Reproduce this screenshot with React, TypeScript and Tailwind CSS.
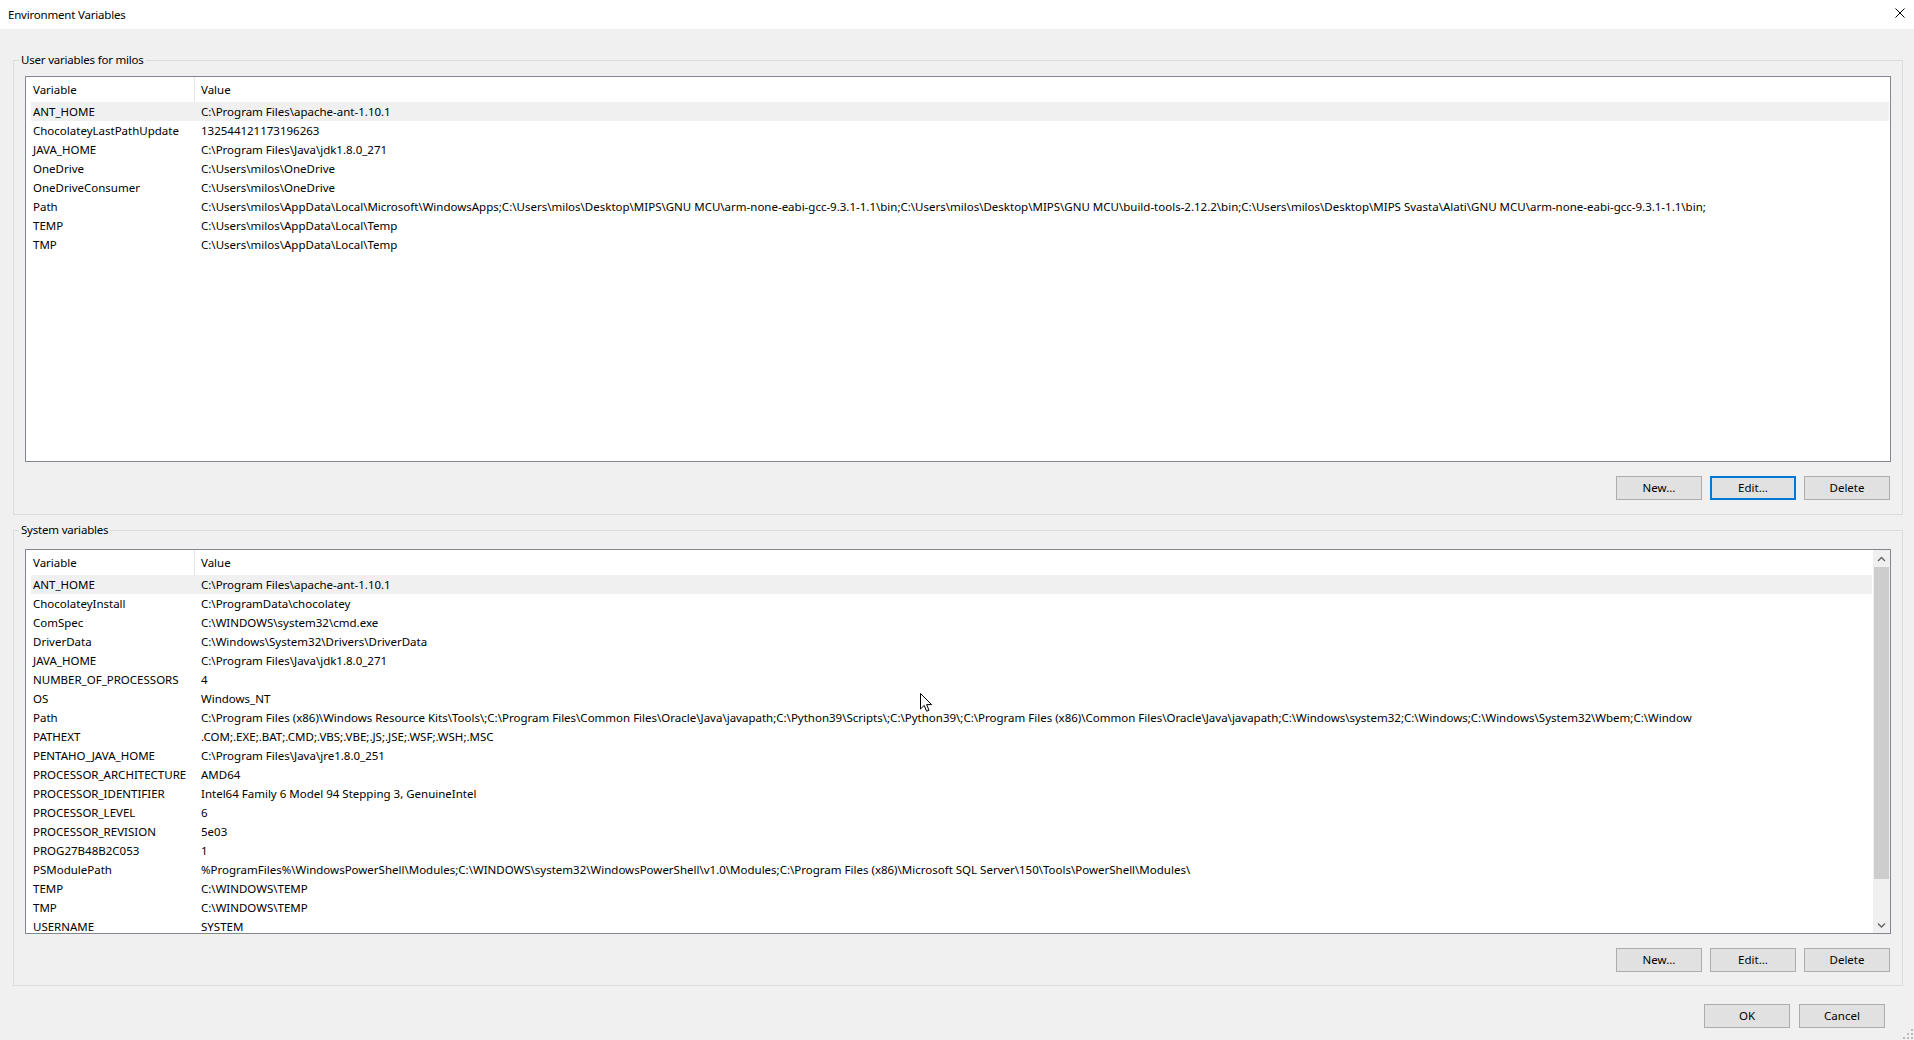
import React from 'react';

type EnvVar = { name: string; value: string };

const userVars: EnvVar[] = [
  { name: 'ANT_HOME', value: String.raw`C:\Program Files\apache-ant-1.10.1` },
  { name: 'ChocolateyLastPathUpdate', value: '132544121173196263' },
  { name: 'JAVA_HOME', value: String.raw`C:\Program Files\Java\jdk1.8.0_271` },
  { name: 'OneDrive', value: String.raw`C:\Users\milos\OneDrive` },
  { name: 'OneDriveConsumer', value: String.raw`C:\Users\milos\OneDrive` },
  {
    name: 'Path',
    value: String.raw`C:\Users\milos\AppData\Local\Microsoft\WindowsApps;C:\Users\milos\Desktop\MIPS\GNU MCU\arm-none-eabi-gcc-9.3.1-1.1\bin;C:\Users\milos\Desktop\MIPS\GNU MCU\build-tools-2.12.2\bin;C:\Users\milos\Desktop\MIPS Svasta\Alati\GNU MCU\arm-none-eabi-gcc-9.3.1-1.1\bin;`,
  },
  { name: 'TEMP', value: String.raw`C:\Users\milos\AppData\Local\Temp` },
  { name: 'TMP', value: String.raw`C:\Users\milos\AppData\Local\Temp` },
];

const systemVars: EnvVar[] = [
  { name: 'ANT_HOME', value: String.raw`C:\Program Files\apache-ant-1.10.1` },
  { name: 'ChocolateyInstall', value: String.raw`C:\ProgramData\chocolatey` },
  { name: 'ComSpec', value: String.raw`C:\WINDOWS\system32\cmd.exe` },
  { name: 'DriverData', value: String.raw`C:\Windows\System32\Drivers\DriverData` },
  { name: 'JAVA_HOME', value: String.raw`C:\Program Files\Java\jdk1.8.0_271` },
  { name: 'NUMBER_OF_PROCESSORS', value: '4' },
  { name: 'OS', value: 'Windows_NT' },
  {
    name: 'Path',
    value: String.raw`C:\Program Files (x86)\Windows Resource Kits\Tools\;C:\Program Files\Common Files\Oracle\Java\javapath;C:\Python39\Scripts\;C:\Python39\;C:\Program Files (x86)\Common Files\Oracle\Java\javapath;C:\Windows\system32;C:\Windows;C:\Windows\System32\Wbem;C:\Window`,
  },
  { name: 'PATHEXT', value: '.COM;.EXE;.BAT;.CMD;.VBS;.VBE;.JS;.JSE;.WSF;.WSH;.MSC' },
  { name: 'PENTAHO_JAVA_HOME', value: String.raw`C:\Program Files\Java\jre1.8.0_251` },
  { name: 'PROCESSOR_ARCHITECTURE', value: 'AMD64' },
  { name: 'PROCESSOR_IDENTIFIER', value: 'Intel64 Family 6 Model 94 Stepping 3, GenuineIntel' },
  { name: 'PROCESSOR_LEVEL', value: '6' },
  { name: 'PROCESSOR_REVISION', value: '5e03' },
  { name: 'PROG27B48B2C053', value: '1' },
  {
    name: 'PSModulePath',
    value:
      String.raw`%ProgramFiles%\WindowsPowerShell\Modules;C:\WINDOWS\system32\WindowsPowerShell\v1.0\Modules;C:\Program Files (x86)\Microsoft SQL Server\150\Tools\PowerShell\Modules` +
      '\\',
  },
  { name: 'TEMP', value: 'C:\\WINDOWS\\TEMP' },
  { name: 'TMP', value: 'C:\\WINDOWS\\TEMP' },
  { name: 'USERNAME', value: 'SYSTEM' },
];

function WinButton({ label, focused }: { label: string; focused?: boolean }) {
  return (
    <button
      className={
        focused
          ? 'w-[86px] h-[24px] bg-[#e1e1e1] border-2 border-[#0078d7] text-black leading-none'
          : 'w-[86px] h-[24px] bg-[#e1e1e1] border border-[#adadad] text-black leading-none'
      }
    >
      {label}
    </button>
  );
}

function ListHeader() {
  return (
    <div className="flex h-[25px] items-center shrink-0">
      <div className="w-[169px] h-full flex items-center pl-[7px] border-r border-[#e5e5e5]">Variable</div>
      <div className="pl-[6px]">Value</div>
    </div>
  );
}

function ListRows({ rows }: { rows: EnvVar[] }) {
  return (
    <div className="flex flex-col">
      {rows.map((row, i) => (
        <div
          key={row.name}
          className={
            i === 0
              ? 'flex h-[19px] items-center ml-[5px] mr-[1px] bg-[#f0f0f0] shrink-0'
              : 'flex h-[19px] items-center ml-[5px] mr-[1px] shrink-0'
          }
        >
          <div className="w-[163px] pl-[2px] shrink-0 whitespace-nowrap overflow-hidden">{row.name}</div>
          <div className="pl-[7px] whitespace-nowrap">{row.value}</div>
        </div>
      ))}
    </div>
  );
}

function Chevron({ down }: { down?: boolean }) {
  return (
    <svg width="9" height="6" viewBox="0 0 9 6">
      <path
        d={down ? 'M1 1.5 L4.5 5 L8 1.5' : 'M1 5 L4.5 1.5 L8 5'}
        fill="none"
        stroke="#606060"
        strokeWidth="1.3"
      />
    </svg>
  );
}

export default function App() {
  return (
    <div className="relative w-[1914px] h-[1040px] overflow-hidden bg-[#f0f0f0] text-[11.5px] text-black font-['Noto_Sans',sans-serif]">
      {/* title bar */}
      <div className="h-[29px] bg-white flex justify-between pl-[8px] pr-[9px]">
        <span className="self-center tracking-[-0.2px]">Environment Variables</span>
        <svg className="mt-[8px]" width="10" height="10" viewBox="0 0 10 10">
          <path d="M0.5 0.5 L9.5 9.5 M9.5 0.5 L0.5 9.5" stroke="#000" strokeWidth="1" />
        </svg>
      </div>

      <div className="pl-[13px] pr-[11px] pt-[23px]">
        {/* user variables */}
        <fieldset className="h-[463px] border border-[#dcdcdc]">
          <legend className="ml-[5px] px-[2px] leading-[16px] tracking-[-0.2px]">User variables for milos</legend>
          <div className="px-[11px]">
            <div className="mt-[8px] h-[386px] border border-[#828790] bg-white overflow-hidden">
              <ListHeader />
              <ListRows rows={userVars} />
            </div>
            <div className="mt-[14px] mr-[1px] flex justify-end gap-[8px]">
              <WinButton label="New..." />
              <WinButton label="Edit..." focused />
              <WinButton label="Delete" />
            </div>
          </div>
        </fieldset>

        {/* system variables */}
        <fieldset className="mt-[7px] h-[464px] border border-[#dcdcdc]">
          <legend className="ml-[5px] px-[2px] leading-[16px] tracking-[-0.2px]">System variables</legend>
          <div className="px-[11px]">
            <div className="mt-[11px] h-[385px] border border-[#828790] bg-white overflow-hidden flex">
              <div className="flex-1 min-w-0 overflow-hidden">
                <ListHeader />
                <ListRows rows={systemVars} />
              </div>
              <div className="w-[17px] shrink-0 bg-[#f0f0f0] flex flex-col">
                <div className="h-[17px] flex items-center justify-center">
                  <Chevron />
                </div>
                <div className="flex-1">
                  <div className="mx-[1px] h-[312px] bg-[#cdcdcd]" />
                </div>
                <div className="h-[17px] flex items-center justify-center">
                  <Chevron down />
                </div>
              </div>
            </div>
            <div className="mt-[14px] mr-[1px] flex justify-end gap-[8px]">
              <WinButton label="New..." />
              <WinButton label="Edit..." />
              <WinButton label="Delete" />
            </div>
          </div>
        </fieldset>

        <div className="mt-[18px] pr-[18px] flex justify-end gap-[9px]">
          <WinButton label="OK" />
          <WinButton label="Cancel" />
        </div>
      </div>

      {/* mouse pointer */}
      <svg className="absolute left-[920px] top-[693px]" width="13" height="20" viewBox="0 0 13 20">
        <path
          d="M0.5 0.5 L0.5 16 L4.2 12.4 L6.6 18.2 L9 17.2 L6.6 11.6 L11.6 11.6 Z"
          fill="#fff"
          stroke="#000"
          strokeWidth="1"
        />
      </svg>

      {/* size grip */}
      <svg className="absolute right-0 bottom-0" width="12" height="12" viewBox="0 0 12 12">
        <rect x="9" y="1" width="2" height="2" fill="#bcbcbc" />
        <rect x="9" y="5" width="2" height="2" fill="#bcbcbc" />
        <rect x="5" y="5" width="2" height="2" fill="#bcbcbc" />
        <rect x="9" y="9" width="2" height="2" fill="#bcbcbc" />
        <rect x="5" y="9" width="2" height="2" fill="#bcbcbc" />
        <rect x="1" y="9" width="2" height="2" fill="#bcbcbc" />
      </svg>
    </div>
  );
}
